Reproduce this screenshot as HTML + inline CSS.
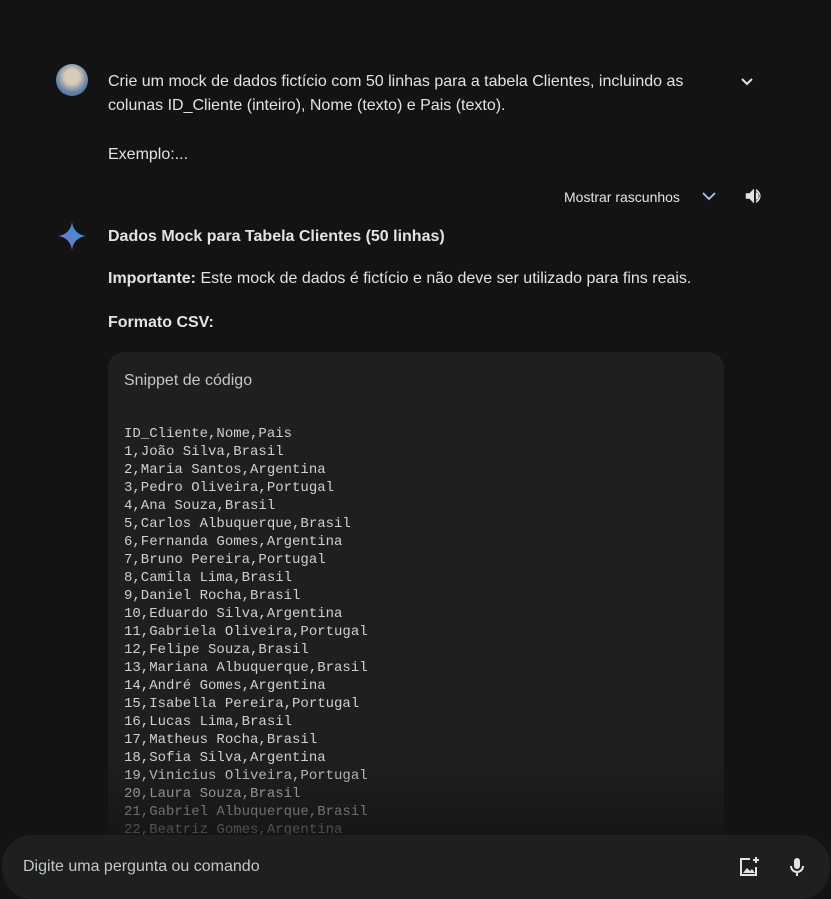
<!DOCTYPE html>
<html style="overflow:hidden"><head><meta charset="utf-8"><style>
*{margin:0;padding:0;box-sizing:border-box}
html,body{width:831px;height:899px;overflow:hidden}
body{background:#131314;color:#e3e3e3;font-family:"Liberation Sans",sans-serif;position:relative}
.t{position:absolute;font-size:16px;color:#e3e3e3}
.code{position:absolute;left:108px;top:352px;width:616px;height:520px;background:#1e1f20;border-radius:16px 16px 0 0}
pre{position:absolute;left:124px;top:425px;font-family:"Liberation Mono",monospace;font-size:14px;line-height:18px;color:#d0d0d0}
.fade{position:absolute;left:0;top:760px;width:831px;height:80px;background:linear-gradient(rgba(19,19,20,0),rgba(19,19,20,0.8))}
.bar{position:absolute;left:2px;top:835px;width:828px;height:64px;background:#1e1f20;border-radius:30px}
</style></head><body>
<div style="position:absolute;left:56px;top:64px;width:32px;height:32px;border-radius:50%;background:radial-gradient(circle at 50% 40%,#d9c9b8 0 30%,#6a86a8 60%,#3a5f8f)"></div>
<div class="t" style="left:108px;top:70px;line-height:24px">Crie um mock de dados fictício com 50 linhas para a tabela Clientes, incluindo as<br>colunas ID_Cliente (inteiro), Nome (texto) e Pais (texto).</div>
<div class="t" style="left:108px;top:143px;line-height:24px">Exemplo:...</div>
<svg style="position:absolute;left:740px;top:76px" width="14" height="12"><path d="M2 3l5 5 5-5" stroke="#e3e3e3" stroke-width="2" fill="none"/></svg>
<div class="t" style="left:564px;top:189px;font-size:14px">Mostrar rascunhos</div>
<svg style="position:absolute;left:701px;top:190px" width="16" height="12"><path d="M2 3l6 6 6-6" stroke="#a8c7fa" stroke-width="1.8" fill="none"/></svg>
<svg style="position:absolute;left:743px;top:185px" width="22" height="22" viewBox="0 0 24 24"><path d="M3 9v6h4l5 5V4L7 9H3z" fill="#e3e3e3"/><path d="M14 4.5a8 8 0 010 15v-2.2a6 6 0 000-10.6z M14 8v8a4 4 0 000-8z" fill="#e3e3e3"/></svg>
<svg style="position:absolute;left:56px;top:220px" width="32" height="32" viewBox="0 0 32 32"><defs><linearGradient id="g" x1="0" y1="1" x2="1" y2="0"><stop offset="0" stop-color="#9168c0"/><stop offset=".5" stop-color="#5684d1"/><stop offset="1" stop-color="#1ba1e3"/></linearGradient></defs><path d="M16 2C17 10 22 15 30 16 22 17 17 22 16 30 15 22 10 17 2 16 10 15 15 10 16 2z" fill="url(#g)"/></svg>
<div class="t" style="left:108px;top:228px;font-weight:bold">Dados Mock para Tabela Clientes (50 linhas)</div>
<div class="t" style="left:108px;top:270px"><b>Importante:</b> Este mock de dados é fictício e não deve ser utilizado para fins reais.</div>
<div class="t" style="left:108px;top:314px;font-weight:bold">Formato CSV:</div>
<div class="code"></div>
<div class="t" style="left:124px;top:372px;color:#c4c7c5">Snippet de código</div>
<pre>ID_Cliente,Nome,Pais
1,João Silva,Brasil
2,Maria Santos,Argentina
3,Pedro Oliveira,Portugal
4,Ana Souza,Brasil
5,Carlos Albuquerque,Brasil
6,Fernanda Gomes,Argentina
7,Bruno Pereira,Portugal
8,Camila Lima,Brasil
9,Daniel Rocha,Brasil
10,Eduardo Silva,Argentina
11,Gabriela Oliveira,Portugal
12,Felipe Souza,Brasil
13,Mariana Albuquerque,Brasil
14,André Gomes,Argentina
15,Isabella Pereira,Portugal
16,Lucas Lima,Brasil
17,Matheus Rocha,Brasil
18,Sofia Silva,Argentina
19,Vinicius Oliveira,Portugal
20,Laura Souza,Brasil
21,Gabriel Albuquerque,Brasil
22,Beatriz Gomes,Argentina</pre>
<div class="fade"></div>
<div class="bar"></div>
<div class="t" style="left:23px;top:858px;color:#c4c7c5">Digite uma pergunta ou comando</div>
<svg style="position:absolute;left:737px;top:855px" width="24" height="24" viewBox="0 0 24 24"><path d="M13 4H4v16h15v-8" stroke="#e3e3e3" stroke-width="2" fill="none"/><path d="M6 18l4-5 3 3 2-2 3 4z" fill="#e3e3e3"/><path d="M19 2v6M16 5h6" stroke="#e3e3e3" stroke-width="2"/></svg>
<svg style="position:absolute;left:785px;top:855px" width="24" height="24" viewBox="0 0 24 24"><rect x="9" y="3" width="6" height="11" rx="3" fill="#e3e3e3"/><path d="M6 11a6 6 0 0012 0M12 17v4" stroke="#e3e3e3" stroke-width="2" fill="none"/></svg>
</body></html>
